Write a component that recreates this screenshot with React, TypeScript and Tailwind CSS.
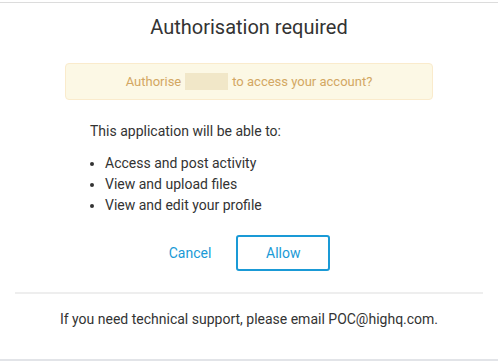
import React from "react";

export default function App() {
  return (
    <div className="w-[498px] h-[361px] bg-white overflow-hidden flex flex-col" style={{ fontFamily: "Roboto, 'Liberation Sans', sans-serif" }}>
      <div className="mt-[2px] h-px bg-[#dcdcdc]" />
      <div className="flex-1 flex flex-col">
        <h1 className="text-center text-[20px] leading-[24px] text-[#333] mt-[12px]">Authorisation required</h1>
        <div className="mx-[65px] mt-[24px] h-[37px] rounded-[4px] border border-[#faebcc] bg-[#fcf8e5] flex items-center justify-center text-[13px] text-[#d3a762]">
          <span>Authorise</span>
          <span className="inline-block w-[43px] h-[17px] bg-[#f1e7c8] mx-[4px]" />
          <span>to access your account?</span>
        </div>
        <div className="px-[90px] mt-[21px] text-[14px] text-[#333]">
          <p className="leading-[20px]">This application will be able to:</p>
          <ul className="mt-[12px] list-disc pl-[15px] leading-[21px]">
            <li>Access and post activity</li>
            <li>View and upload files</li>
            <li>View and edit your profile</li>
          </ul>
        </div>
        <div className="mt-[19px] flex justify-center items-center gap-[24px] text-[14px] text-[#1a9ad6]">
          <button className="px-[1px] h-[35px]">Cancel</button>
          <button className="w-[94px] h-[36px] border-2 border-[#1a9ad6] rounded-[3px]">Allow</button>
        </div>
        <div className="mx-[15px] mt-[21px] h-[2px] bg-[#eeeeee]" />
        <p className="text-center text-[14px] text-[#333] mt-[15px] leading-[20px]">If you need technical support, please email POC@highq.com.</p>
      </div>
      <div className="h-[2px] bg-[#e2e4e8]" />
    </div>
  );
}
